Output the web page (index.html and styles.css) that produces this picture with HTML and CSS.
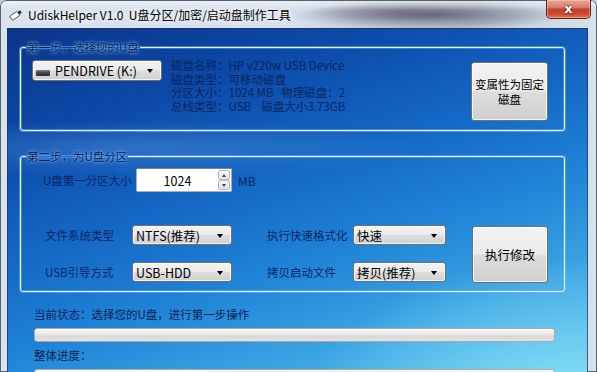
FILE: index.html
```html
<!DOCTYPE html>
<html lang="zh-CN">
<head>
<meta charset="utf-8">
<title>UdiskHelper V1.0</title>
<link rel="stylesheet" href="styles.css">
</head>
<body>
<div class="window">
  <div class="titlebar">
    <svg class="app-icon" width="14" height="12" viewBox="0 0 14 12">
      <g transform="rotate(-35 7 6)">
        <rect x="1" y="3.5" width="9" height="5" rx="0.8" fill="#ffffff" stroke="#3a3a3a" stroke-width="0.8"/>
        <rect x="10" y="4.5" width="3" height="3" fill="#2a2a2a"/>
      </g>
    </svg>
    <span class="title">UdiskHelper V1.0&nbsp;&nbsp;U盘分区/加密/启动盘制作工具</span>
    <div class="close"><span>x</span></div>
  </div>
  <div class="client">
    <fieldset class="group g1">
      <legend>第一步，选择您的U盘</legend>
      <div class="g1-body">
        <div class="combo drive">
          <span class="drive-icon"></span>
          <span class="combo-text">PENDRIVE (K:)</span>
          <span class="arrow"></span>
        </div>
        <div class="info">
          <div class="info-line">磁盘名称：HP v220w USB Device</div>
          <div class="info-line">磁盘类型：可移动磁盘</div>
          <div class="info-line">分区大小：1024 MB   物理磁盘：2</div>
          <div class="info-line">总线类型：USB    磁盘大小3.73GB</div>
        </div>
        <div class="btn btn-fixed">变属性为固定<br>磁盘</div>
      </div>
    </fieldset>

    <fieldset class="group g2">
      <legend>第二步，为U盘分区</legend>
      <div class="g2-body">
        <div class="size-row">
          <span class="label size-label">U盘第一分区大小</span>
          <div class="spin">
            <div class="spin-field">1024</div>
            <div class="spin-btns">
              <span class="spin-btn"><span class="tri-up"></span></span>
              <span class="spin-btn"><span class="tri-down"></span></span>
            </div>
          </div>
          <span class="label unit">MB</span>
        </div>
        <div class="opts">
          <span class="label">文件系统类型</span>
          <div class="combo"><span class="combo-text">NTFS(推荐)</span><span class="arrow"></span></div>
          <span></span>
          <span class="label">执行快速格式化</span>
          <div class="combo"><span class="combo-text">快速</span><span class="arrow"></span></div>
          <span></span>
          <div class="btn btn-run">执行修改</div>

          <span class="label">USB引导方式</span>
          <div class="combo"><span class="combo-text">USB-HDD</span><span class="arrow"></span></div>
          <span></span>
          <span class="label">拷贝启动文件</span>
          <div class="combo"><span class="combo-text">拷贝(推荐)</span><span class="arrow"></span></div>
          <span></span>
        </div>
      </div>
    </fieldset>

    <div class="status">
      <div class="status-text">当前状态：选择您的U盘，进行第一步操作</div>
      <div class="progress"></div>
      <div class="status-text second">整体进度：</div>
      <div class="progress"></div>
    </div>
  </div>
</div>
</body>
</html>
```

FILE: styles.css
```css
* { box-sizing: border-box; }
html, body { margin: 0; padding: 0; }
body {
  width: 597px;
  height: 372px;
  overflow: hidden;
  background: #c3d2e0;
  font-family: "Noto Sans CJK SC", "Noto Sans", sans-serif;
}

.window {
  width: 597px;
  height: 372px;
  display: flex;
  flex-direction: column;
  border-radius: 6px 6px 0 0;
  overflow: hidden;
  box-shadow: inset 0 0 0 1px #55636f;
  background:
    linear-gradient(180deg, rgba(255,255,255,0.55) 0px, rgba(255,255,255,0) 10px),
    radial-gradient(ellipse 140px 14px at 430px 15px, rgba(80,80,100,0.75), rgba(80,80,100,0) 100%),
    radial-gradient(ellipse 90px 10px at 400px 12px, rgba(120,70,120,0.35), rgba(120,70,120,0) 100%),
    linear-gradient(90deg, #d9e3ee 0%, #d5dfea 50%, #c2ccd8 62%, #b9c4d0 80%, #cfd9e4 92%, #d7e1ea 100%);
}

.titlebar {
  height: 28px;
  flex: none;
  display: flex;
  align-items: center;
  padding-left: 9px;
}
.app-icon { flex: none; margin-top: 2px; }
.title {
  margin-left: 5px;
  font-size: 12px;
  color: #000;
  text-shadow: 0 0 5px #fff, 0 0 8px rgba(255,255,255,0.9);
  white-space: nowrap;
}
.close {
  margin-left: auto;
  margin-right: 6px;
  align-self: flex-start;
  width: 45px;
  height: 19px;
  border: 1px solid #5b2419;
  border-top: none;
  border-radius: 0 0 5px 5px;
  background: linear-gradient(180deg, #e9a697 0%, #d9806d 40%, #c3402a 52%, #cc4a32 80%, #e07a55 100%);
  box-shadow: inset 0 0 0 1px rgba(255,210,200,0.45);
  display: flex;
  align-items: center;
  justify-content: center;
}
.close span {
  font-family: "DejaVu Sans", sans-serif;
  font-weight: bold;
  font-size: 13px;
  line-height: 13px;
  color: #fff;
  margin-top: -2px;
  text-shadow: 0 0 2px #4a1208, 0 0 1px #4a1208;
}

.client {
  flex: 1;
  margin: 0 9px 0 7px;
  padding-top: 12px;
  box-shadow: inset 0 0 0 1px rgba(30,50,90,0.7);
  background:
    radial-gradient(ellipse 420px 40px at 120px 120px, rgba(120,180,240,0.3), rgba(120,180,240,0) 70%),
    radial-gradient(ellipse 260px 150px at 560px 380px, rgba(150,235,250,0.75), rgba(150,235,250,0) 100%),
    linear-gradient(162deg, #0a3488 0%, #0c4aa8 22%, #1466c4 42%, #1f82d6 60%, #3aa3e2 78%, #5ec3ee 100%);
}

.group {
  margin: 0 0 0 13px;
  padding: 0;
  width: 545px;
  min-width: 0;
  border: 1px solid #e6f3ff;
  border-radius: 3px;
  box-shadow: 0 0 0 1px rgba(110,180,240,0.55), inset 0 0 0 1px rgba(110,180,240,0.45);
}
.group legend {
  margin-left: 5px;
  padding: 0 1px;
  font-size: 11.5px;
  line-height: 14px;
  color: #08204f;
  text-shadow: 0 0 2px rgba(120,180,255,1), 0 0 4px rgba(120,180,255,0.9);
}
.g2 { margin-top: 18px; }

.g1-body {
  display: flex;
  align-items: flex-start;
  padding: 6px 16px 9px 11px;
}

.combo {
  position: relative;
  display: flex;
  align-items: center;
  height: 20px;
  padding-left: 3px;
  border: 1px solid #707070;
  border-radius: 3px;
  background: linear-gradient(180deg, #f3f3f3 0%, #ebebeb 48%, #dddddd 52%, #d0d0d0 100%);
  box-shadow: inset 0 0 0 1px rgba(255,255,255,0.7);
  font-size: 12.5px;
  color: #000;
  white-space: nowrap;
}
.combo .arrow {
  position: absolute;
  right: 8px;
  top: 8px;
  width: 0;
  height: 0;
  border-left: 3.5px solid transparent;
  border-right: 3.5px solid transparent;
  border-top: 4px solid #000;
}
.drive {
  width: 130px;
  height: 21px;
}
.drive-icon {
  width: 14px;
  height: 6px;
  margin-top: 5px;
  margin-right: 5px;
  border-radius: 1px;
  background: linear-gradient(180deg, #8a8a8a 0%, #4a4a4a 40%, #2d2d2d 100%);
}

.info {
  margin-left: 9px;
  margin-top: -1px;
  font-size: 11.5px;
  line-height: 13.5px;
  color: #0a2460;
}
.info-line { white-space: pre; }

.btn {
  display: flex;
  align-items: center;
  justify-content: center;
  text-align: center;
  border: 1px solid #707070;
  border-radius: 3px;
  background: linear-gradient(180deg, #f2f2f2 0%, #ebebeb 48%, #dddddd 52%, #cfcfcf 100%);
  box-shadow: inset 0 0 0 1px rgba(255,255,255,0.75);
  color: #000;
  font-size: 11.5px;
  line-height: 15px;
}
.btn-fixed {
  margin-left: auto;
  margin-top: 2px;
  width: 77px;
  height: 59px;
}

.g2-body {
  padding: 5px 16px 9px 22px;
}
.label {
  font-size: 11.5px;
  color: #0c2460;
  white-space: nowrap;
}
.size-row {
  display: flex;
  align-items: center;
  height: 24px;
}
.size-label { width: 93px; }
.spin {
  display: flex;
  width: 96px;
  height: 24px;
  border: 1px solid #abadb3;
  border-top-color: #7a8290;
  border-radius: 2px;
  background: #fff;
}
.spin-field {
  flex: 1;
  display: flex;
  align-items: center;
  justify-content: center;
  font-size: 12.5px;
  color: #000;
}
.spin-btns {
  display: flex;
  flex-direction: column;
  width: 12px;
  margin: 1px 1px 1px 0;
}
.spin-btn {
  flex: 1;
  display: flex;
  align-items: center;
  justify-content: center;
  border: 1px solid #b8b8b8;
  border-radius: 2px;
  background: linear-gradient(180deg, #f7f7f7, #e2e2e2);
}
.tri-up, .tri-down {
  width: 0;
  height: 0;
  border-left: 2.5px solid transparent;
  border-right: 2.5px solid transparent;
}
.tri-up { border-bottom: 3px solid #3c4a66; }
.tri-down { border-top: 3px solid #3c4a66; }
.unit { margin-left: 6px; font-size: 12px; }

.opts {
  margin-top: 33px;
  display: grid;
  grid-template-columns: 89px 100px 33px 88px 93px 26px 76px;
  grid-template-rows: 20px 20px;
  row-gap: 17px;
  align-items: center;
}
.opts .label { padding-left: 2px; }
.opts .combo { height: 20px; }
.btn-run {
  grid-column: 7;
  grid-row: 1 / 3;
  align-self: start;
  margin-top: 1px;
  height: 57px;
  font-size: 12.5px;
}

.status {
  margin-top: 14px;
  padding-left: 27px;
}
.status-text {
  font-size: 11.5px;
  line-height: 16px;
  color: #0b2154;
}
.status-text.second { margin-top: 5px; }
.progress {
  margin-top: 6px;
  width: 521px;
  height: 14px;
  border: 1px solid #a9a9a9;
  border-radius: 3px;
  background: linear-gradient(180deg, #f4f4f4 0%, #ebebeb 40%, #d9d9d9 60%, #e2e2e2 100%);
  box-shadow: inset 0 1px 0 #fff;
}
```
